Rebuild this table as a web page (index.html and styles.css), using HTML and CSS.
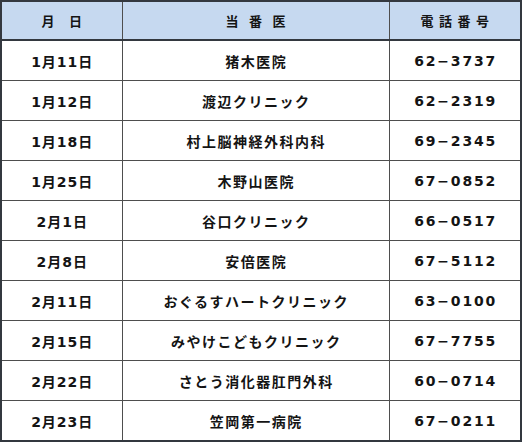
FILE: index.html
```html
<!DOCTYPE html>
<html lang="ja">
<head>
<meta charset="utf-8">
<link rel="stylesheet" href="styles.css">
</head>
<body>
<table class="duty">
  <colgroup>
    <col class="c-date">
    <col class="c-name">
    <col class="c-tel">
  </colgroup>
  <thead>
    <tr>
      <th class="h-date">月 日</th>
      <th class="h-name">当 番 医</th>
      <th class="h-tel">電話番号</th>
    </tr>
  </thead>
  <tbody>
    <tr><td class="date">1月11日</td><td class="name">猪木医院</td><td class="tel">62−3737</td></tr>
    <tr><td class="date">1月12日</td><td class="name">渡辺クリニック</td><td class="tel">62−2319</td></tr>
    <tr><td class="date">1月18日</td><td class="name">村上脳神経外科内科</td><td class="tel">69−2345</td></tr>
    <tr><td class="date">1月25日</td><td class="name">木野山医院</td><td class="tel">67−0852</td></tr>
    <tr><td class="date">2月1日</td><td class="name">谷口クリニック</td><td class="tel">66−0517</td></tr>
    <tr><td class="date">2月8日</td><td class="name">安倍医院</td><td class="tel">67−5112</td></tr>
    <tr><td class="date">2月11日</td><td class="name">おぐるすハートクリニック</td><td class="tel">63−0100</td></tr>
    <tr><td class="date">2月15日</td><td class="name">みやけこどもクリニック</td><td class="tel">67−7755</td></tr>
    <tr><td class="date">2月22日</td><td class="name">さとう消化器肛門外科</td><td class="tel">60−0714</td></tr>
    <tr><td class="date">2月23日</td><td class="name">笠岡第一病院</td><td class="tel">67−0211</td></tr>
  </tbody>
</table>
</body>
</html>
```

FILE: styles.css
```css
html, body {
  margin: 0;
  padding: 0;
  background: #ffffff;
}

.duty {
  border-collapse: collapse;
  table-layout: fixed;
  width: 520px;
  font-family: "DejaVu Sans", "Noto Sans CJK JP", sans-serif;
  font-weight: 700;
  color: #141414;
  border: 2px solid #33383f;
}

.c-date { width: 121px; }
.c-name { width: 267px; }
.c-tel { width: 132px; }

.duty th,
.duty td {
  border: 1px solid #4e4e4e;
  text-align: center;
  vertical-align: middle;
  padding: 0;
  white-space: nowrap;
}

.duty thead th {
  height: 37px;
  background: #c6d9f0;
  font-size: 13px;
  border-bottom: 2px solid #33383f;
}

.h-date { letter-spacing: 5px; text-indent: 5px; }
.h-name { letter-spacing: 3px; text-indent: 3px; }
.h-tel { letter-spacing: 5.5px; text-indent: 5.5px; }

.duty tbody td {
  height: 39px;
  font-size: 14px;
}

.date { letter-spacing: 1px; text-indent: 1px; }
.name { letter-spacing: 1.5px; text-indent: 1.5px; }
.tel { letter-spacing: 1.8px; text-indent: 1.8px; }
```
